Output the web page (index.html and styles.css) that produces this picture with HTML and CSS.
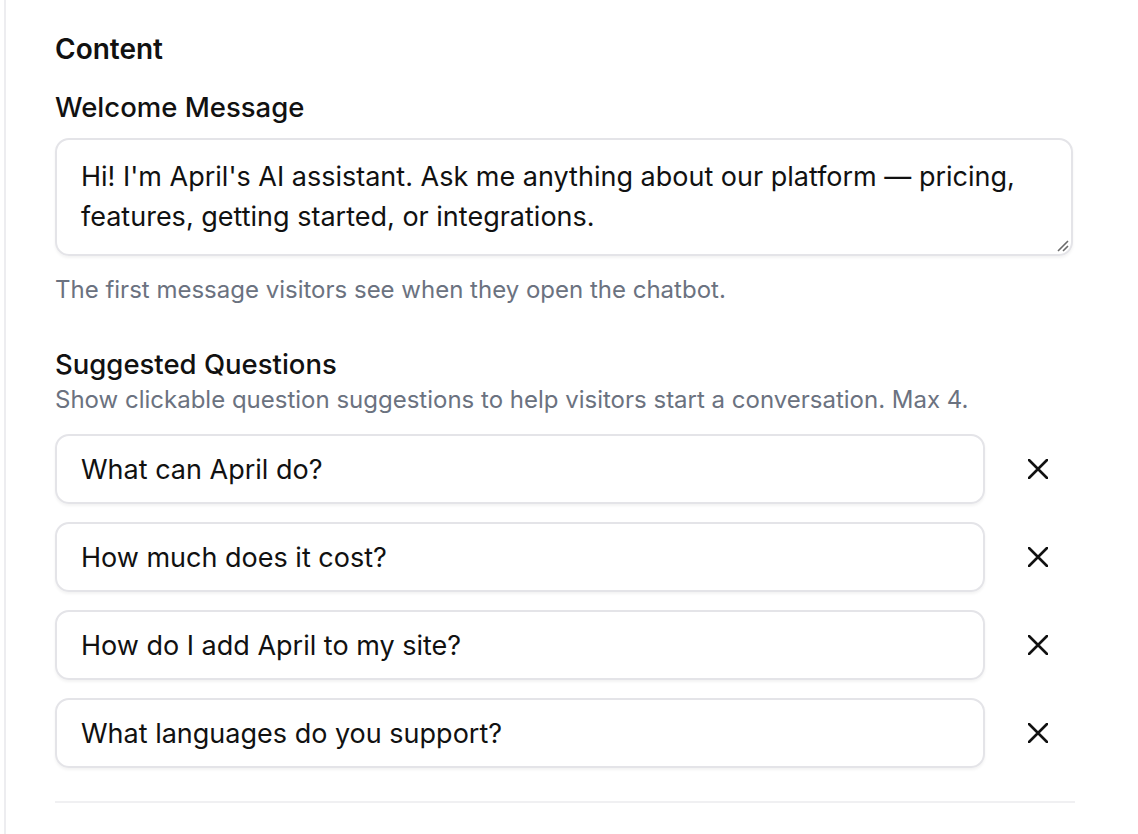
FILE: index.html
```html
<!DOCTYPE html>
<html lang="en">
<head>
<meta charset="utf-8">
<title>Content settings</title>
<link rel="stylesheet" href="styles.css">
</head>
<body>
<div class="card">
  <h2 class="title">Content</h2>
  <div class="field">
    <label class="label">Welcome Message</label>
    <div class="textarea">Hi! I'm April's AI assistant. Ask me anything about our platform — pricing, features, getting started, or integrations.<svg class="grip" width="14" height="14" viewBox="0 0 14 14"><path d="M13 3 3 13M13 8 8 13" stroke="#6b6b6b" stroke-width="1.6" fill="none"/></svg></div>
    <p class="help">The first message visitors see when they open the chatbot.</p>
  </div>
  <div class="field sq">
    <div class="label">Suggested Questions</div>
    <p class="help help-top">Show clickable question suggestions to help visitors start a conversation. Max 4.</p>
    <div class="list">
      <div class="row"><div class="input">What can April do?</div><button class="remove" aria-label="Remove"><svg width="20" height="20" viewBox="0 0 20 20"><path d="M1 1 19 19M19 1 1 19" stroke="#111" stroke-width="2.6" stroke-linecap="round" fill="none"/></svg></button></div>
      <div class="row"><div class="input">How much does it cost?</div><button class="remove" aria-label="Remove"><svg width="20" height="20" viewBox="0 0 20 20"><path d="M1 1 19 19M19 1 1 19" stroke="#111" stroke-width="2.6" stroke-linecap="round" fill="none"/></svg></button></div>
      <div class="row"><div class="input">How do I add April to my site?</div><button class="remove" aria-label="Remove"><svg width="20" height="20" viewBox="0 0 20 20"><path d="M1 1 19 19M19 1 1 19" stroke="#111" stroke-width="2.6" stroke-linecap="round" fill="none"/></svg></button></div>
      <div class="row"><div class="input">What languages do you support?</div><button class="remove" aria-label="Remove"><svg width="20" height="20" viewBox="0 0 20 20"><path d="M1 1 19 19M19 1 1 19" stroke="#111" stroke-width="2.6" stroke-linecap="round" fill="none"/></svg></button></div>
    </div>
  </div>
  <div class="divider"></div>
</div>
</body>
</html>
```
FILE: styles.css
```css
html, body {
  margin: 0;
  padding: 0;
  background: #ffffff;
}
body {
  font-family: Inter, "Noto Sans", "Liberation Sans", sans-serif;
  color: #111111;
  height: 834px;
  overflow: hidden;
}
.card {
  margin-left: 4px;
  width: 1070px;
  height: 900px;
  border-left: 2px solid #ededf0;
  border-right: 2px solid #ededf0;
  padding: 30px 46px 0 49px;
}
.title {
  margin: 0;
  font-size: 28px;
  line-height: 38px;
  font-weight: 600;
}
.field {
  margin-top: 21px;
}
.label {
  display: block;
  font-size: 27.5px;
  line-height: 36px;
  font-weight: 500;
}
.textarea {
  position: relative;
  margin-top: 13px;
  box-sizing: border-box;
  width: 1018px;
  height: 118px;
  border: 2px solid #e4e4e8;
  border-radius: 14px;
  box-shadow: 0 2px 3px rgba(0,0,0,0.05);
  padding: 17px 24px;
  font-size: 27px;
  line-height: 40px;
}
.grip {
  position: absolute;
  right: 2px;
  bottom: 2px;
}
.help {
  margin: 18px 0 0;
  color: #6b7280;
  font-size: 24px;
  line-height: 32px;
}
.sq {
  margin-top: 40px;
}
.help-top {
  margin-top: 2px;
}
.list {
  margin-top: 18px;
  display: flex;
  flex-direction: column;
  gap: 18px;
}
.row {
  display: flex;
  align-items: center;
}
.input {
  box-sizing: border-box;
  width: 930px;
  height: 70px;
  border: 2px solid #e4e4e8;
  border-radius: 14px;
  box-shadow: 0 2px 3px rgba(0,0,0,0.05);
  padding: 0 24px;
  display: flex;
  align-items: center;
  font-size: 27px;
}
.remove {
  margin-left: 43px;
  width: 20px;
  height: 20px;
  padding: 0;
  border: 0;
  background: none;
  display: flex;
}
.divider {
  margin-top: 33px;
  height: 2px;
  background: #f0f0f2;
  width: 1020px;
}
```
